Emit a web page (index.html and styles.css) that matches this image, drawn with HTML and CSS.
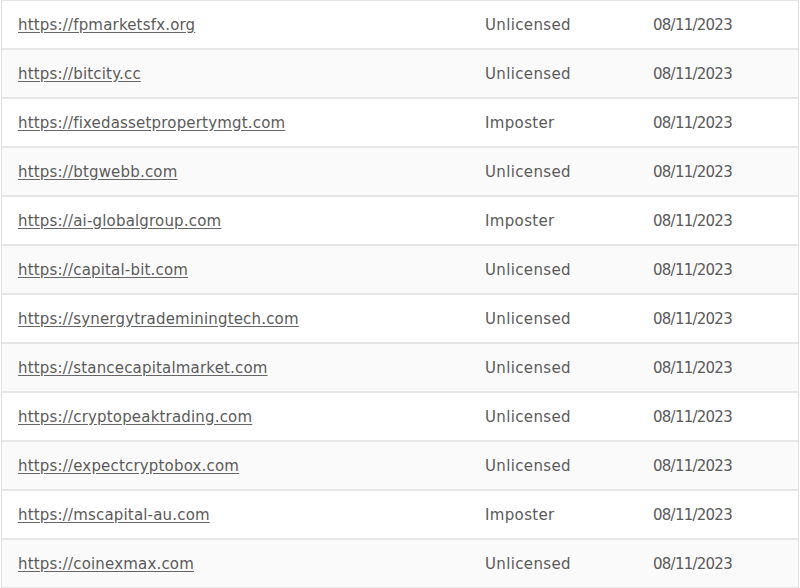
FILE: index.html
```html
<!DOCTYPE html>
<html>
<head>
<meta charset="utf-8">
<link rel="stylesheet" href="styles.css">
</head>
<body>
<div class="table">
  <div class="row"><a class="url" href="#">https://fpmarketsfx.org</a><span class="status">Unlicensed</span><span class="date">08/11/2023</span></div>
  <div class="row"><a class="url" href="#">https://bitcity.cc</a><span class="status">Unlicensed</span><span class="date">08/11/2023</span></div>
  <div class="row"><a class="url" href="#">https://fixedassetpropertymgt.com</a><span class="status">Imposter</span><span class="date">08/11/2023</span></div>
  <div class="row"><a class="url" href="#">https://btgwebb.com</a><span class="status">Unlicensed</span><span class="date">08/11/2023</span></div>
  <div class="row"><a class="url" href="#">https://ai-globalgroup.com</a><span class="status">Imposter</span><span class="date">08/11/2023</span></div>
  <div class="row"><a class="url" href="#">https://capital-bit.com</a><span class="status">Unlicensed</span><span class="date">08/11/2023</span></div>
  <div class="row"><a class="url" href="#">https://synergytrademiningtech.com</a><span class="status">Unlicensed</span><span class="date">08/11/2023</span></div>
  <div class="row"><a class="url" href="#">https://stancecapitalmarket.com</a><span class="status">Unlicensed</span><span class="date">08/11/2023</span></div>
  <div class="row"><a class="url" href="#">https://cryptopeaktrading.com</a><span class="status">Unlicensed</span><span class="date">08/11/2023</span></div>
  <div class="row"><a class="url" href="#">https://expectcryptobox.com</a><span class="status">Unlicensed</span><span class="date">08/11/2023</span></div>
  <div class="row"><a class="url" href="#">https://mscapital-au.com</a><span class="status">Imposter</span><span class="date">08/11/2023</span></div>
  <div class="row"><a class="url" href="#">https://coinexmax.com</a><span class="status">Unlicensed</span><span class="date">08/11/2023</span></div>
</div>
</body>
</html>
```
FILE: styles.css
```css
html, body {
  margin: 0;
  padding: 0;
  background: #ffffff;
}
.table {
  width: 796px;
  margin-left: 1px;
  border-left: 1px solid #e2e2e2;
  border-right: 1px solid #e2e2e2;
  border-top: 1px solid #e2e2e2;
  font-family: "DejaVu Sans", sans-serif;
  font-size: 15px;
  color: #5a5a5a;
}
.row {
  display: grid;
  grid-template-columns: 467px 168px 1fr;
  align-items: center;
  height: 47px;
  padding: 0 16px;
  border-bottom: 2px solid #e6e6e6;
  background: #ffffff;
}
.row:nth-child(even) {
  background: #fafafa;
}
.url {
  color: #5a5a5a;
  letter-spacing: 0.18px;
  text-decoration: underline;
  text-decoration-color: #666666;
  text-underline-offset: 2px;
  justify-self: start;
}
.status {
  color: #5a5a5a;
  letter-spacing: 0.35px;
}
.date {
  color: #5a5a5a;
  font-size: 15px;
  letter-spacing: -0.75px;
}
```
